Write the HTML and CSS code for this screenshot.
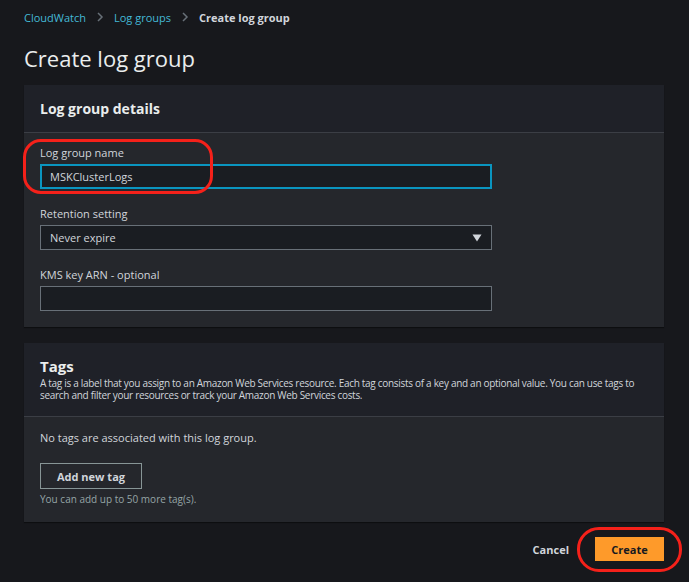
FILE: index.html
```html
<!DOCTYPE html>
<html>
<head>
<meta charset="utf-8">
<link rel="stylesheet" href="styles.css">
</head>
<body>
<div class="page">
  <nav class="crumbs">
    <a class="crumb-link">CloudWatch</a>
    <svg class="chev" width="8" height="10" viewBox="0 0 8 10"><path d="M2 1 L6 5 L2 9" fill="none" stroke="#687078" stroke-width="1.5"/></svg>
    <a class="crumb-link">Log groups</a>
    <svg class="chev" width="8" height="10" viewBox="0 0 8 10"><path d="M2 1 L6 5 L2 9" fill="none" stroke="#687078" stroke-width="1.5"/></svg>
    <span class="crumb-current">Create log group</span>
  </nav>
  <h1 class="title">Create log group</h1>

  <section class="panel">
    <header class="panel-head head-details">
      <h2 class="panel-title">Log group details</h2>
    </header>
    <div class="panel-body details-body">
      <div class="field field-name">
        <label class="label">Log group name</label>
        <div class="input input-focus">MSKClusterLogs</div>
        <div class="annot annot-name"></div>
      </div>
      <div class="field">
        <label class="label">Retention setting</label>
        <div class="input select">
          <span>Never expire</span>
          <svg class="caret" width="10" height="8" viewBox="0 0 10 8"><path d="M0.5 0.5 H9.5 L5 7.5 Z" fill="#d1d5db"/></svg>
        </div>
      </div>
      <div class="field">
        <label class="label">KMS key ARN - optional</label>
        <div class="input"></div>
      </div>
    </div>
  </section>

  <section class="panel">
    <header class="panel-head head-tags">
      <h2 class="tags-title">Tags</h2>
      <p class="tags-desc">A tag is a label that you assign to an Amazon Web Services resource. Each tag consists of a key and an optional value. You can use tags to search and filter your resources or track your Amazon Web Services costs.</p>
    </header>
    <div class="panel-body tags-body">
      <p class="no-tags">No tags are associated with this log group.</p>
      <button class="btn-normal">Add new tag</button>
      <p class="hint">You can add up to 50 more tag(s).</p>
    </div>
  </section>

  <footer class="actions">
    <button class="btn-link">Cancel</button>
    <div class="create-wrap">
      <button class="btn-primary">Create</button>
      <div class="annot annot-create"></div>
    </div>
  </footer>
</div>
</body>
</html>
```

FILE: styles.css
```css
* { box-sizing: border-box; }
html, body { margin: 0; padding: 0; }
body {
  background: #17181c;
  color: #d1d5db;
  font-family: "Open Sans", "Noto Sans", sans-serif;
  font-size: 11px;
  width: 689px;
  height: 582px;
  overflow: hidden;
}
.page {
  padding: 9px 25px 0 24px;
}
.crumbs {
  display: flex;
  align-items: center;
  gap: 10px;
  height: 16px;
  font-size: 11px;
}
.crumb-link { color: #44b9d6; }
.crumb-current { color: #d1d5db; font-weight: 700; }
.chev { display: block; }
.title {
  margin: 19px 0 0 0;
  font-size: 22px;
  font-weight: 400;
  line-height: 28px;
  color: #eaeded;
  height: 28px;
}
.panel {
  position: relative;
  margin-top: 13px;
  background: #25272c;
  box-shadow: 0 1px 1px rgba(0,0,0,0.4);
}
.panel + .panel { margin-top: 16px; }
.panel-head {
  background: #1f2128;
  border-bottom: 1px solid #3b3e45;
  padding: 0 16px;
}
.head-details {
  height: 48px;
  display: flex;
  align-items: center;
}
.panel-title {
  margin: 0;
  font-size: 14px;
  font-weight: 700;
  color: #eaeded;
}
.details-body {
  padding: 12px 16px 16px 16px;
  display: flex;
  flex-direction: column;
  gap: 17px;
}
.field { position: relative; display: flex; flex-direction: column; gap: 3px; }
.label { font-size: 11px; line-height: 16px; color: #d1d5db; }
.input {
  width: 452px;
  height: 25px;
  background: #1a1d22;
  border: 1px solid #687078;
  padding: 0 9px;
  display: flex;
  align-items: center;
  font-size: 11px;
  color: #d1d5db;
}
.input-focus { border: 2px solid #0a95c0; padding: 0 8px; }
.select { justify-content: space-between; padding-right: 9px; }
.caret { display: block; }
.annot {
  position: absolute;
  border: 3px solid #f5211a;
  border-radius: 18px;
  pointer-events: none;
}
.annot-name {
  left: -17px;
  top: -6px;
  width: 190px;
  height: 55px;
}
.head-tags { padding: 13px 16px 16px 16px; height: 74px; }
.tags-title {
  margin: 0;
  font-size: 15px;
  line-height: 20px;
  font-weight: 700;
  color: #eaeded;
}
.tags-desc {
  margin: 1px 0 0 0;
  font-size: 10px;
  line-height: 12px;
  letter-spacing: -0.3px;
  color: #d1d5db;
}
.tags-body { padding: 13px 16px 16px 16px; }
.no-tags { margin: 0; font-size: 11px; line-height: 16px; }
.btn-normal {
  margin-top: 17px;
  display: block;
  width: 102px;
  height: 26px;
  background: transparent;
  border: 1px solid #879596;
  color: #d1d5db;
  font-family: inherit;
  font-weight: 700;
  font-size: 11px;
  padding: 0;
}
.hint { margin: 3px 0 0 0; font-size: 10px; line-height: 14px; color: #95a5a6; }
.actions {
  margin-top: 15px;
  display: flex;
  justify-content: flex-end;
  align-items: center;
  gap: 26px;
}
.btn-link {
  background: none;
  border: none;
  color: #d1d5db;
  font-family: inherit;
  font-weight: 700;
  font-size: 11px;
  padding: 0;
}
.create-wrap { position: relative; }
.btn-primary {
  display: block;
  width: 69px;
  height: 24px;
  background: #fe9a2a;
  border: none;
  color: #16191f;
  font-family: inherit;
  font-weight: 700;
  font-size: 11px;
  padding: 0;
}
.annot-create {
  left: -18px;
  top: -10px;
  width: 105px;
  height: 45px;
  border-radius: 22px;
}
```
